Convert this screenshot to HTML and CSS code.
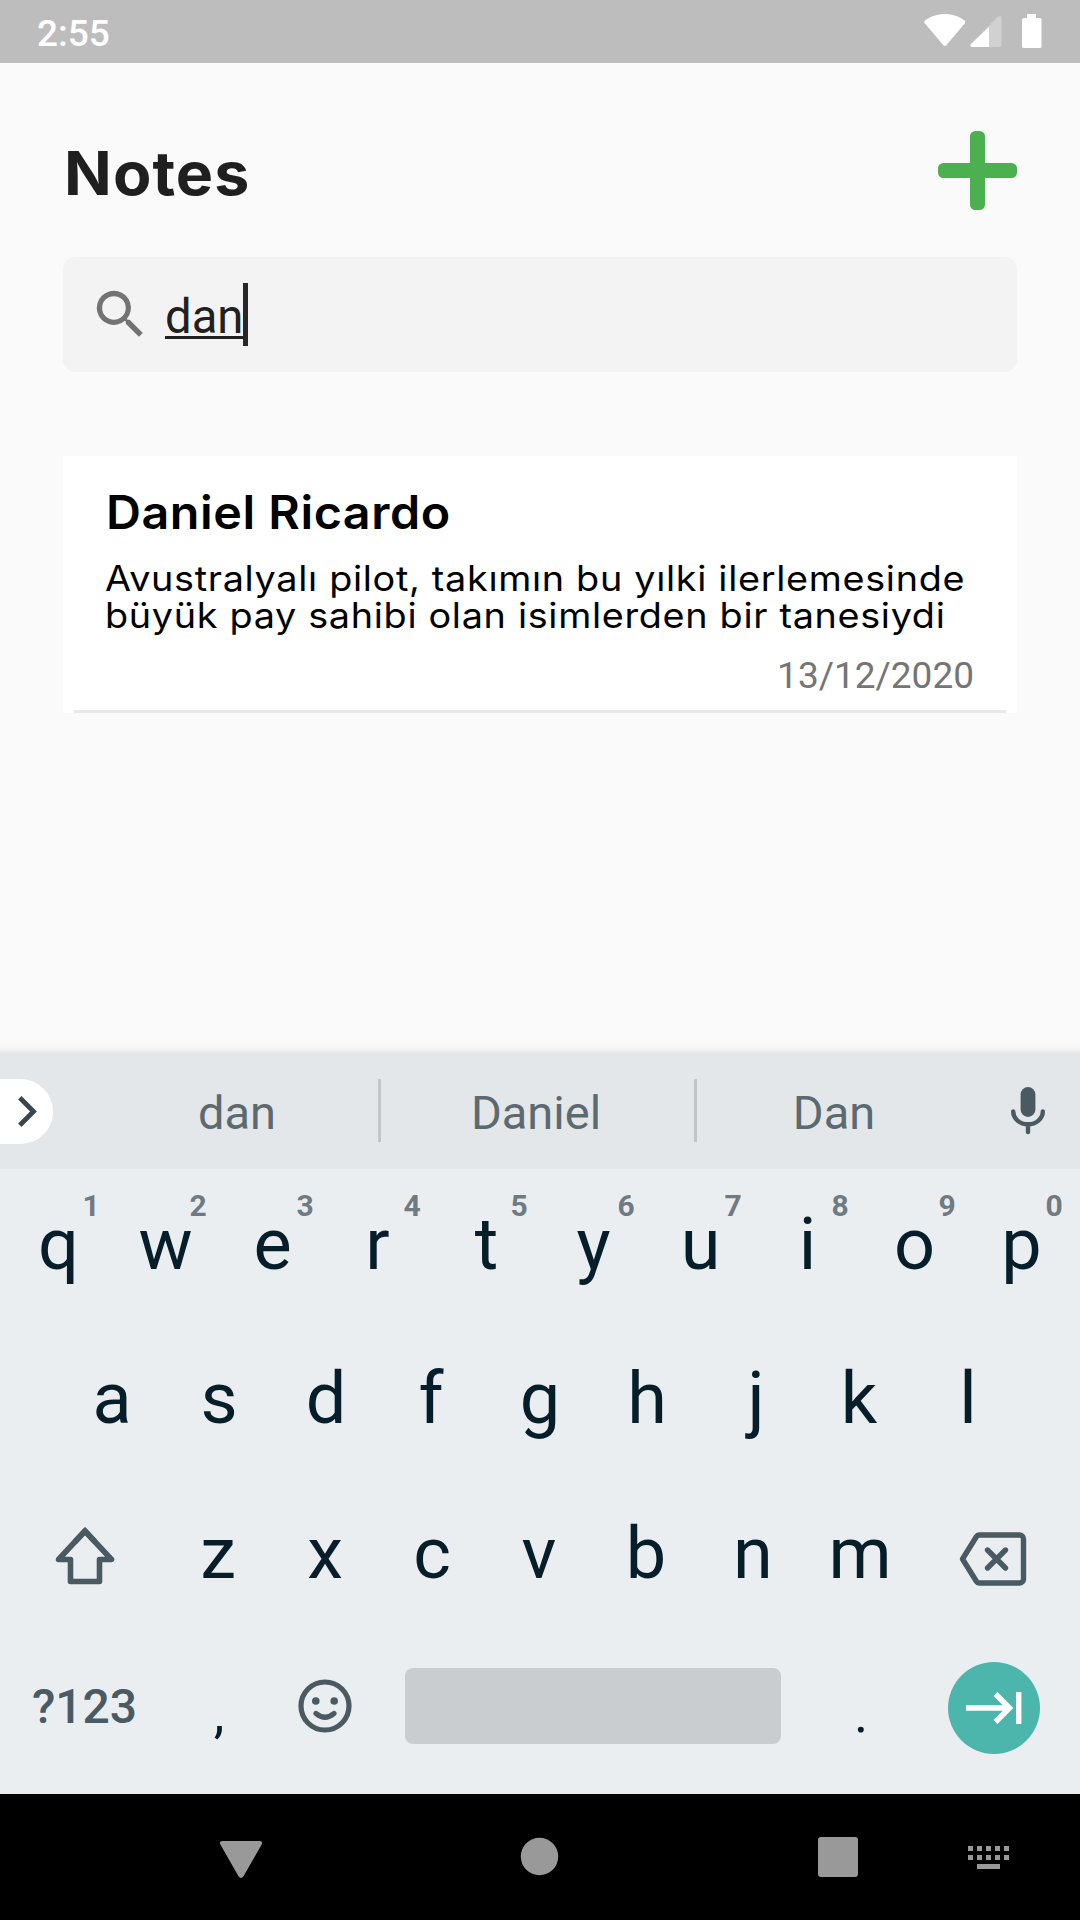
FILE: index.html
```html
<!DOCTYPE html>
<html lang="tr">
<head>
<meta charset="utf-8">
<title>Notes</title>
<link rel="stylesheet" href="styles.css">
</head>
<body>
<div class="status">
  <span class="time">2:55</span>
  <svg class="status-icons" width="120" height="34" viewBox="0 0 120 34" fill="#fff">
    <path d="M.8 9.200C-.1 8.400 0 7.300 1 6.600 12-2.200 29.500-2.200 40.500 6.600c1 .7 1.100 1.800.4 2.700L22.300 31.300c-.9 1-2.100 1-3 0z"/>
    <path opacity=".3" d="M77.500 4v26.500a2.500 2.500 0 0 1-2.500 2.500H48.500c-2 0-2.800-1.500-1.500-3L73.500 3c1.500-1.500 4-1.500 4 1z"/>
    <path d="M65 13v20H48.500c-2 0-2.800-1.500-1.500-3z"/>
    <path d="M103 0h9v4h4a1.500 1.500 0 0 1 1.500 1.500v27A1.500 1.500 0 0 1 116 34h-16.500a1.500 1.500 0 0 1-1.500-1.500v-27A1.500 1.500 0 0 1 99.500 4h3.500z"/>
  </svg>
</div>
<main class="app">
  <header class="header">
    <h1>Notes</h1>
    <svg width="79" height="79" viewBox="0 0 79 79" fill="#4caf50"><rect y="32" width="79" height="15" rx="5.500"/><rect x="32" width="15" height="79" rx="5.500"/></svg>
  </header>
  <div class="search">
    <svg width="63" height="63" viewBox="0 0 24 24" fill="#737373"><path d="M15.500 14h-.8l-.3-.3a6.500 6.500 0 1 0-.7.7l.3.3v.8l5 5 1.500-1.500zm-6 0a4.500 4.500 0 1 1 0-9 4.500 4.500 0 0 1 0 9z"/></svg>
    <span class="query">dan</span><span class="cursor"></span>
  </div>
  <article class="note">
    <h2>Daniel Ricardo</h2>
    <p>Avustralyalı pilot, takımın bu yılki ilerlemesinde büyük pay sahibi olan isimlerden bir tanesiydi</p>
    <time>13/12/2020</time>
  </article>
</main>
<section class="keyboard">
  <div class="suggest">
    <div class="chip"><svg width="19" height="31" viewBox="0 0 19 31" fill="none" stroke="#37474f" stroke-width="4.800"><path d="M1.800 1.800 15.500 15.500 1.800 29.200"/></svg></div>
    <span class="word">dan</span><i></i><span class="word mid">Daniel</span><i></i><span class="word end">Dan</span>
    <svg class="mic" width="34" height="48" viewBox="0 0 34 48"><rect x="9.600" y="0" width="14.800" height="30" rx="7.400" fill="#4a5a62"/><path d="M2.200 24.500a14.800 12.800 0 0 0 29.600 0M17 38v7" fill="none" stroke="#4a5a62" stroke-width="4.400" stroke-linecap="round"/></svg>
  </div>
  <div class="row"><b>q<sup>1</sup></b><b>w<sup>2</sup></b><b>e<sup>3</sup></b><b class="left">r<sup>4</sup></b><b>t<sup>5</sup></b><b>y<sup>6</sup></b><b>u<sup>7</sup></b><b>i<sup>8</sup></b><b>o<sup>9</sup></b><b>p<sup>0</sup></b></div>
  <div class="row middle"><b>a</b><b>s</b><b>d</b><b class="left">f</b><b>g</b><b>h</b><b class="right">j</b><b class="left">k</b><b>l</b></div>
  <div class="row lower">
    <span class="wide"><svg class="shift" width="60" height="60" viewBox="0 0 60 60" fill="none" stroke="#4a5a62" stroke-width="5.600" stroke-linejoin="round"><path d="M30 4 56.500 32.500H44.500V54.500h-29V32.500H3.500z"/><path stroke-linejoin="miter" d="M20 14.750 30 4 40 14.750"/></svg></span>
    <b>z</b><b>x</b><b>c</b><b>v</b><b>b</b><b>n</b><b>m</b>
    <span class="wide"><svg class="back" width="68" height="54" viewBox="0 0 68 54" fill="none" stroke="#4a5a62" stroke-width="5.400" stroke-linejoin="round"><path d="M20 3h40.500a4 4 0 0 1 4 4v40a4 4 0 0 1-4 4H20q-1.500 0-2.500-1.500L3.500 27 17.500 4.500Q18.500 3 20 3z"/><path stroke-linecap="round" d="m28.500 18 18 18m0-18-18 18"/></svg></span>
  </div>
  <div class="row lower last">
    <span class="wide sym">?123</span>
    <b class="punct">,</b>
    <b><svg width="54" height="54" viewBox="0 0 54 54" fill="none" stroke="#4a5a62" stroke-width="5.200" stroke-linecap="round"><circle cx="27" cy="27" r="24"/><path d="M18 34.500q9 7.500 18 0"/><g fill="#4a5a62" stroke="none"><circle cx="17.800" cy="22" r="3.800"/><circle cx="36.200" cy="22" r="3.800"/></g></svg></b>
    <span class="space-slot"><span class="space"></span></span>
    <b class="punct">.</b>
    <span class="wide"><span class="enter"><svg width="56" height="32" viewBox="0 0 56 32" fill="none" stroke="#fff" stroke-width="5.400"><path d="M0 16h44M29.500 2l14 14-14 14M52.700 0v32"/></svg></span></span>
  </div>
</section>
<nav class="nav">
  <svg width="1080" height="126" viewBox="0 0 1080 126" fill="#999">
    <path d="M222.500 47h37q4 0 2 3.800l-18 31.500q-2.500 3.400-5 0l-18-31.500q-2-3.800 2-3.800z"/>
    <circle cx="539.500" cy="62.500" r="18.700"/>
    <rect x="818" y="43" width="40" height="40" rx="3"/>
    <path d="M968 52h5v5h-5zm9 0h5v5h-5zm9 0h5v5h-5zm9 0h5v5h-5zm9 0h5v5h-5zM968 61h5v5h-5zm9 0h5v5h-5zm9 0h5v5h-5zm9 0h5v5h-5zm9 0h5v5h-5zM977 70h23v5h-23z"/>
  </svg>
</nav>
</body>
</html>
```
FILE: styles.css
```css
* { box-sizing: border-box; }
body {
  margin: 0;
  width: 1080px;
  height: 1920px;
  overflow: hidden;
  display: flex;
  flex-direction: column;
  background: #fafafa;
  font-family: Roboto, sans-serif;
}
svg { display: block; flex: none; }
h1, h2, p { margin: 0; transform-origin: left; }

.status {
  height: 63px;
  padding: 0 36px 0 37px;
  display: flex;
  justify-content: space-between;
  background: #bdbdbd;
}
.time { font-size: 37px; font-weight: 500; line-height: 68px; color: #fff; }
.status-icons { margin-top: 14px; }

.app {
  height: 990px;
  padding: 68px 63px 0;
  background: linear-gradient(#fafafa, #f6f6f6 60%, #e6e6e6) bottom / 100% 12px no-repeat;
}
.header {
  height: 79px;
  display: flex;
  justify-content: space-between;
}
.header h1 {
  font: 700 60px/84px Inter, sans-serif;
  letter-spacing: 1px;
  padding-left: 1px;
  transform: scaleX(1.045);
  color: #1f1f1f;
}
.search {
  height: 115px;
  margin-top: 47px;
  padding: 26px 26px;
  display: flex;
  background: #f3f3f3;
  border-radius: 12px;
}
.query {
  margin-left: 13px;
  font-size: 47.25px;
  line-height: 68px;
  height: 56px;
  width: 78px;
  border-bottom: 3px solid #212121;
  color: #212121;
}
.cursor { width: 5px; height: 63px; background: #292626; }

.note {
  height: 257px;
  margin-top: 84px;
  padding: 30px 43px 0;
  background: linear-gradient(#e8e8e8, #e8e8e8) 11px 254px / 932px 3px no-repeat #fff;
  color: #000;
}
.note h2 {
  width: 600px;
  font: 600 46px/52px Inter, sans-serif;
  letter-spacing: .5px;
  transform: scaleX(1.053);
}
.note p {
  width: 806px;
  margin: 22px 0 0 -1px;
  font: 400 35px/37px Inter, sans-serif;
  letter-spacing: .620px;
  transform: scaleX(1.080);
}
.note time {
  display: block;
  margin-top: 20px;
  text-align: right;
  font-size: 37px;
  line-height: 43px;
  color: #757575;
}

.keyboard { height: 741px; background: #ebeef1; }
.suggest {
  height: 116px;
  display: flex;
  align-items: center;
  background: #e3e7ea;
}
.chip {
  width: 53px;
  height: 65px;
  margin-right: 43px;
  padding: 17px 18px;
  background: #fff;
  border-radius: 0 33px 33px 0;
}
.word {
  width: 282px;
  text-align: center;
  font-size: 47px;
  line-height: 60px;
  padding-top: 4px;
  color: #5c6a70;
}
.word.mid { width: 313px; padding-right: 3px; }
.word.end { width: 274px; }
.suggest i { width: 3px; height: 63px; margin-bottom: 1px; background: #c1c6c9; }
.mic { margin-left: 40px; }

.row {
  height: 154.500px;
  display: flex;
  justify-content: center;
}
.row.lower { padding-right: 2px; }
.row b {
  position: relative;
  width: 107px;
  text-align: center;
  font-size: 72px;
  font-weight: 400;
  line-height: 151px;
  color: #061e29;
}
.row.middle b { line-height: 149px; }
.row .left { padding-right: 4px; }
.row .right { padding-left: 4px; }
.row sup {
  position: absolute;
  left: 74px;
  top: 19px;
  width: 24px;
  font-size: 30px;
  font-weight: 700;
  line-height: 36px;
  color: #6f7b81;
}
.wide { width: 160px; display: flex; justify-content: center; padding-top: 48px; }
.shift { margin-top: 1px; }
.back { margin: 6px 1px 0 0; }
.last .wide { padding-top: 29px; }
.last .sym { font-size: 48px; font-weight: 500; line-height: 90px; color: #4a5a62; }
.last b svg { margin: 46px auto 0; }
.last b.punct { font-size: 54px; line-height: 161px; padding-left: 2px; }
.space-slot { width: 428px; padding: 35px 26px; }
.space { display: block; height: 76px; border-radius: 8px; background: #c9cdd0; }
.enter {
  width: 92px;
  height: 92px;
  border-radius: 50%;
  background: #4db6ac;
  display: flex;
  align-items: center;
  justify-content: center;
}
.nav { height: 126px; background: #000; }
```
